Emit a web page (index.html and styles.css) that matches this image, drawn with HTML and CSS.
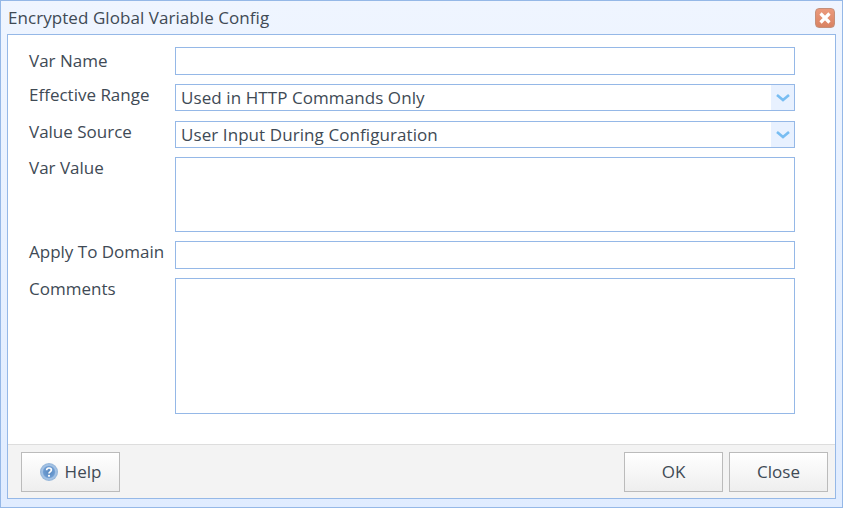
FILE: index.html
```html
<!DOCTYPE html>
<html lang="en">
<head>
<meta charset="utf-8">
<title>Encrypted Global Variable Config</title>
<link rel="stylesheet" href="styles.css">
</head>
<body>
<div class="window">
  <div class="titlebar">
    <span class="title">Encrypted Global Variable Config</span>
    <button class="close-x" aria-label="Close">
      <svg width="18" height="18" viewBox="0 0 18 18"><path d="M4.500 4.500l9 9M13.500 4.500l-9 9" stroke="#fff" stroke-width="3.200" fill="none"/></svg>
    </button>
  </div>
  <div class="panel">
    <form class="form">
      <label class="lbl lbl-first">Var Name</label>
      <div class="field h28"></div>
      <label class="lbl">Effective Range</label>
      <div class="field h27 select select-first"><span class="val">Used in HTTP Commands Only</span><span class="arrow"><svg width="16" height="10" viewBox="0 0 16 10"><path d="M2 2l6 5 6-5" stroke="#78bdf2" stroke-width="2.600" fill="none"/></svg></span></div>
      <label class="lbl">Value Source</label>
      <div class="field h27 select"><span class="val">User Input During Configuration</span><span class="arrow"><svg width="16" height="10" viewBox="0 0 16 10"><path d="M2 2l6 5 6-5" stroke="#78bdf2" stroke-width="2.600" fill="none"/></svg></span></div>
      <label class="lbl">Var Value</label>
      <div class="field h75"></div>
      <label class="lbl">Apply To Domain</label>
      <div class="field h28"></div>
      <label class="lbl">Comments</label>
      <div class="field h136"></div>
    </form>
    <div class="footer">
      <button class="btn help"><svg class="help-icon" width="18" height="18" viewBox="0 0 18 18"><defs><radialGradient id="g" cx="50%" cy="50%" r="50%"><stop offset="0" stop-color="#5a8ac0"/><stop offset=".6" stop-color="#6b9ad0"/><stop offset=".75" stop-color="#a8c5e6"/><stop offset="1" stop-color="#8fb2d8"/></radialGradient></defs><circle cx="9" cy="9" r="9" fill="url(#g)"/><path d="M6.600 7.200C6.700 5.800 7.700 5 9 5c1.400 0 2.400.8 2.400 2 0 1.900-2.400 1.800-2.400 3.500" stroke="#fff" stroke-width="1.700" fill="none"/><circle cx="9" cy="12.800" r="1.100" fill="#fff"/></svg><span>Help</span></button>
      <div class="actions">
        <button class="btn">OK</button>
        <button class="btn">Close</button>
      </div>
    </div>
  </div>
</div>
</body>
</html>
```
FILE: styles.css
```css
* { box-sizing: border-box; }
html, body { margin: 0; padding: 0; }
body { width: 843px; height: 508px; overflow: hidden; font-family: "Open Sans", sans-serif; font-size: 17px; color: #404a55; background: #fff; }
.window { width: 843px; height: 508px; border: 1px solid #95b8e7; background: linear-gradient(to bottom, #eff5ff, #e0ecff 100%); display: flex; flex-direction: column; padding: 0 6px 8px 6px; }
.titlebar { height: 33px; display: flex; align-items: center; justify-content: space-between; padding: 0 1px; flex: none; }
.title { letter-spacing: .06px; }
.close-x { width: 20px; height: 20px; padding: 0; border: 1px solid #c4907a; border-radius: 4px; background: linear-gradient(#eb9a7c, #d98262); display: flex; align-items: center; justify-content: center; }
.panel { flex: 1; background: #fff; border: 1px solid #95b8e7; display: flex; flex-direction: column; }
.form { flex: 1; display: grid; grid-template-columns: 146px 620px; align-content: start; row-gap: 9px; padding: 12px 0 0 21px; }
.lbl { line-height: 22px; height: 22px; white-space: nowrap; }
.lbl-first { margin-top: 3px; }
.field { border: 1px solid #95b8e7; background: #fff; }
.h28 { height: 28px; }
.h27 { height: 27px; }
.h75 { height: 75px; }
.h136 { height: 136px; }
.select { display: flex; align-items: center; justify-content: space-between; }
.select-first { margin-bottom: 1px; }
.val { padding-left: 5px; letter-spacing: .08px; }
.arrow { width: 23px; height: 100%; background: #e8f1ff; display: flex; align-items: center; justify-content: center; }
.footer { height: 54px; background: #f3f3f3; border-top: 1px solid #ddd; display: flex; justify-content: space-between; padding: 7px 7px 0 13px; flex: none; }
.actions { display: flex; gap: 6px; }
.btn { width: 99px; height: 40px; border: 1px solid #bbb; background: linear-gradient(#fff, #eee); font: inherit; color: inherit; display: flex; align-items: center; justify-content: center; gap: 7px; padding: 0 0 2px; }
.help-icon { margin-top: 1px; }
```
